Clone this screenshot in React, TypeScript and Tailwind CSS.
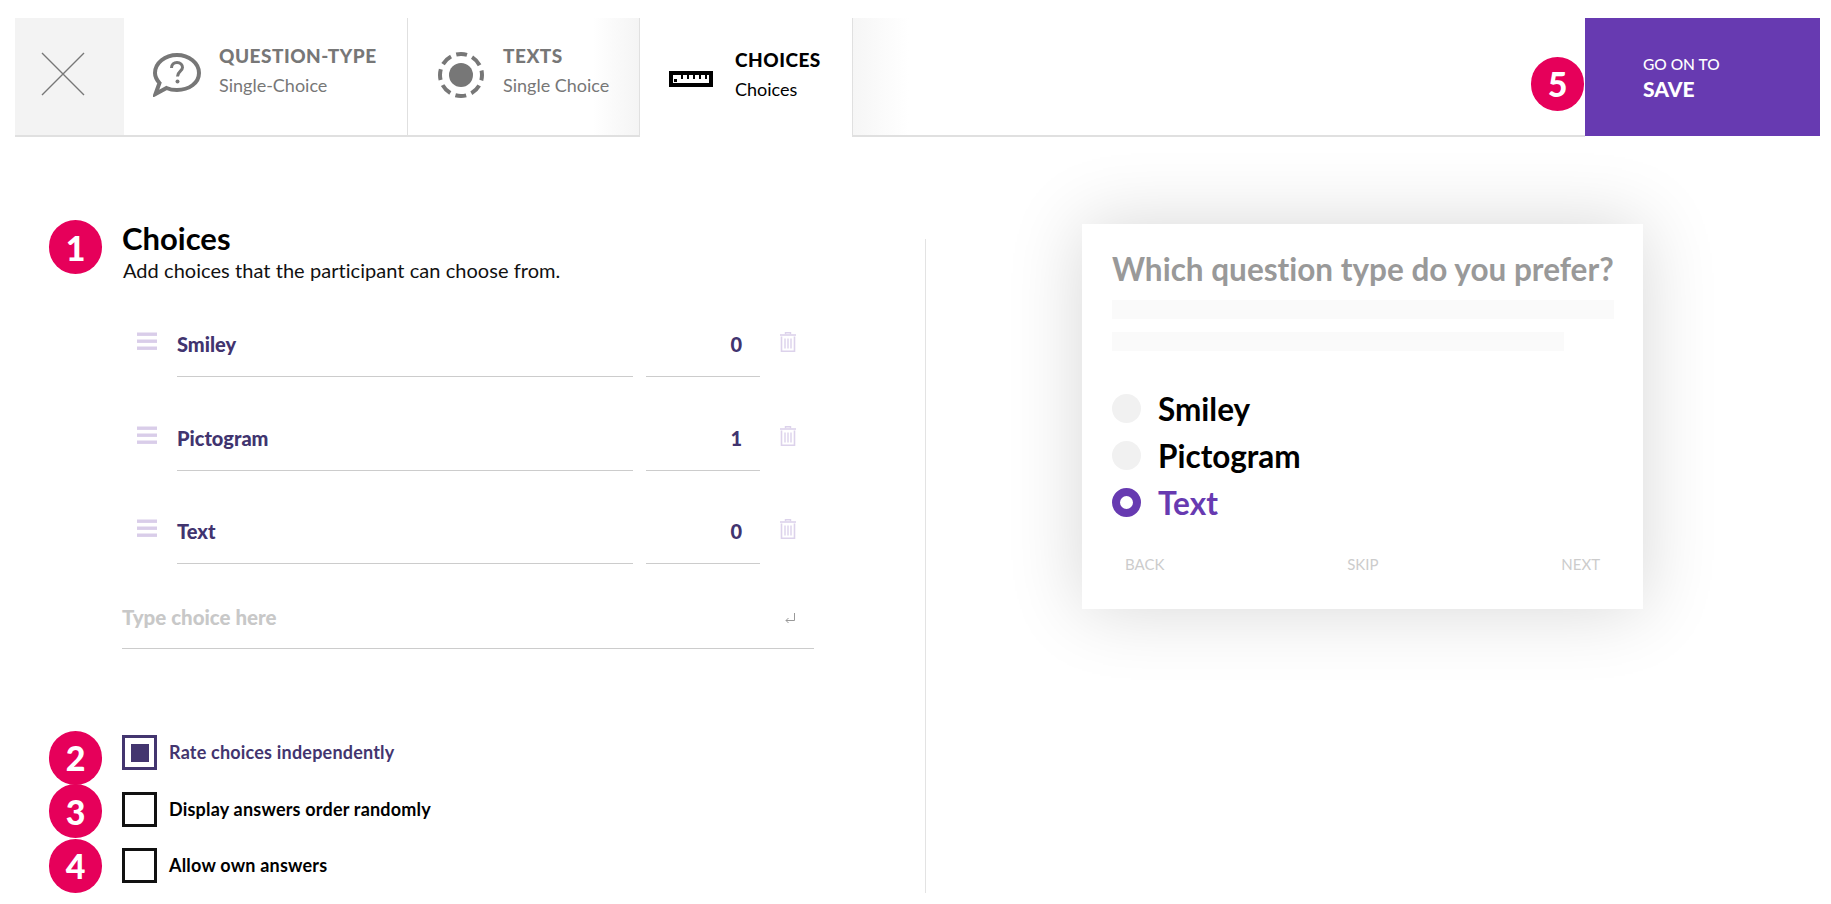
import React from "react";

const Badge = ({ n, className = "" }: { n: number; className?: string }) => (
  <div className={`w-[53px] h-[54px] rounded-full bg-[#e6005a] text-white flex items-center justify-center text-[34px] font-black shrink-0 ${className}`}>
    {n}
  </div>
);

const Bubble = () => (
  <svg width="48" height="44" viewBox="0 0 48 44" fill="none" stroke="#777" strokeWidth="4" className="shrink-0">
    <path d="M24 2C36 2 46 10 46 20C46 30 36 37 24 37C20 37 16.5 36.3 13.5 35L2.5 41L6.5 30C3.8 27 2 23.5 2 20C2 10 12 2 24 2Z" />
    <path d="M18.5 15C18.5 11.5 21 9.5 24 9.5C27.5 9.5 29.5 12 29.5 14.5C29.5 18 24.5 18.5 24.5 23.5" strokeWidth="3" />
    <circle cx="24.5" cy="28.5" r="2" fill="#777" stroke="none" />
  </svg>
);

const DashedRadio = () => (
  <svg width="46" height="46" viewBox="0 0 46 46" fill="none" className="shrink-0">
    <circle cx="23" cy="23" r="21" stroke="#777" strokeWidth="4" strokeDasharray="11 5.49" strokeDashoffset="5.5" />
    <circle cx="23" cy="23" r="12" fill="#777" />
  </svg>
);

const Ruler = () => (
  <svg width="44" height="17" viewBox="0 0 44 17" className="shrink-0">
    <rect x="2" y="2" width="40" height="12" fill="#fff" stroke="#000" strokeWidth="4" />
    <rect x="5" y="8" width="3" height="3" fill="#000" />
    {[12, 18, 24, 30, 36].map((x) => (
      <rect key={x} x={x} y="4" width="2" height="4" fill="#000" />
    ))}
  </svg>
);

const Burger = () => (
  <svg width="20" height="18" viewBox="0 0 20 18" fill="#d9cde9" className="shrink-0">
    <rect y="0.5" width="20" height="3.4" />
    <rect y="7.5" width="20" height="3.4" />
    <rect y="14.5" width="20" height="3.4" />
  </svg>
);

const Trash = () => (
  <svg width="16" height="20" viewBox="0 0 16 20" fill="none" stroke="#dcd2eb" className="shrink-0">
    <path d="M0 3h16" strokeWidth="1.6" />
    <path d="M5.5 2.2V.8h5v1.4" strokeWidth="1.4" />
    <path d="M1.5 4.5v14.7h13V4.5" strokeWidth="1.6" />
    <path d="M5 6.5v10M8 6.5v10M11 6.5v10" strokeWidth="1.4" />
  </svg>
);

const Tab = ({
  icon,
  title,
  sub,
  className,
  textClass,
  children,
}: {
  icon: React.ReactNode;
  title: string;
  sub: string;
  className: string;
  textClass: string;
  children?: React.ReactNode;
}) => (
  <div className={`relative flex ${className}`}>
    {children}
    {icon}
    <div className={`relative ${textClass}`}>
      <div className="text-[19px] leading-[24px] font-black tracking-[0.5px]">{title}</div>
      <div className="text-[18px] leading-[24px] mt-[5px] whitespace-nowrap">{sub}</div>
    </div>
  </div>
);

const Row = ({ name, value }: { name: string; value: number }) => (
  <div className="flex h-[93.5px] pl-[137px]">
    <div className="flex items-start gap-[20px] w-[626px] pt-[16px] shrink-0">
      <Burger />
      <div className="flex-1 flex gap-[13px] h-[44px]">
        <div className="w-[456px] h-[45px] border-b-[1.5px] border-[#cccccc] text-[20px] leading-[24px] font-black text-[#41346f]">
          {name}
        </div>
        <div className="w-[114px] h-[45px] border-b-[1.5px] border-[#cccccc] text-[20px] leading-[24px] font-black text-[#41346f] text-right pr-[18px]">
          {value}
        </div>
      </div>
      <Trash />
    </div>
  </div>
);

const Check = ({ n, label, on, badgeClass }: { n: number; label: string; on?: boolean; badgeClass: string }) => (
  <div className="flex items-center h-[56.6px] pl-[49px]">
    <Badge n={n} className={badgeClass} />
    <div
      className={`ml-[20px] w-[35px] h-[35px] border-[3px] flex items-center justify-center shrink-0 ${
        on ? "border-[#43356f]" : "border-[#111111]"
      }`}
    >
      {on && <div className="w-[18px] h-[18px] bg-[#43356f]" />}
    </div>
    <span className={`ml-[12px] text-[18px] tracking-[0.2px] font-bold ${on ? "text-[#43356f]" : "text-black"}`}>{label}</span>
  </div>
);

const Radio = ({ label, on }: { label: string; on?: boolean }) => (
  <div className="flex items-center h-[47px]">
    {on ? (
      <div className="w-[29px] h-[29px] rounded-full border-[8px] border-[#673ab1] bg-white shrink-0" />
    ) : (
      <div className="w-[29px] h-[29px] rounded-full bg-[#f1f1f1] shrink-0" />
    )}
    <span className={`ml-[17px] text-[31.5px] font-bold leading-[40px] ${on ? "text-[#673ab1]" : "text-black"}`}>{label}</span>
  </div>
);

export default function App() {
  return (
    <div className="w-full h-[904px] bg-white overflow-hidden pt-[18px] [font-variant-ligatures:none] font-['Lato','Noto_Sans',sans-serif]">
      <div className="flex h-[119px] ml-[15px] mr-[11px]">
        <div className="w-[109px] bg-[#f3f3f3] border-b-2 border-[#e0e0e0] flex items-center pl-[26px] pb-[5px] shrink-0">
          <svg width="44" height="44" viewBox="0 0 44 44" stroke="#777" strokeWidth="1.4" fill="none">
            <path d="M1 1l42 42M43 1L1 43" />
          </svg>
        </div>
        <Tab
          className="w-[284px] border-b-2 border-r border-[#e0e0e0] pl-[29px] pt-[35px] text-[#777] shrink-0"
          textClass="ml-[18px] -mt-[9px]"
          icon={<Bubble />}
          title="QUESTION-TYPE"
          sub="Single-Choice"
        />
        <Tab
          className="w-[232px] border-b-2 border-r border-[#e0e0e0] pl-[30px] pt-[34px] text-[#777] shrink-0"
          textClass="ml-[19px] -mt-[8px]"
          icon={<DashedRadio />}
          title="TEXTS"
          sub="Single Choice"
        >
          <div className="absolute right-0 top-0 bottom-0 w-[46px] bg-linear-to-l from-[#f4f4f4] to-transparent" />
        </Tab>
        <Tab
          className="w-[212px] pl-[29px] pt-[53px] text-black shrink-0"
          textClass="ml-[22px] -mt-[23px]"
          icon={<Ruler />}
          title="CHOICES"
          sub="Choices"
        />
        <div className="relative flex-1 border-b-2 border-l border-[#e0e0e0] flex items-center justify-end">
          <div className="absolute left-0 top-0 bottom-0 w-[56px] bg-linear-to-r from-[#f6f6f6] to-transparent" />
          <Badge n={5} className="relative mr-[1px] mt-[14px]" />
        </div>
        <div className="w-[235px] h-[118px] bg-[#673ab1] text-white pl-[58px] pt-[36px] shrink-0">
          <div className="text-[15.5px] leading-[20px] font-medium">GO ON TO</div>
          <div className="text-[21px] leading-[24px] font-black mt-[3px]">SAVE</div>
        </div>
      </div>

      <div className="flex">
        <div className="w-[925px] shrink-0 pt-[83px]">
          <div className="flex pl-[49px]">
            <Badge n={1} />
            <div className="ml-[21px]">
              <div className="text-[31px] leading-[36px] font-bold text-black -ml-[1px]">Choices</div>
              <div className="text-[20px] leading-[24px] text-[#111] mt-[2px] tracking-[0.05px]">Add choices that the participant can choose from.</div>
            </div>
          </div>
          <div className="mt-[34px]">
            <Row name="Smiley" value={0} />
            <Row name="Pictogram" value={1} />
            <Row name="Text" value={0} />
          </div>
          <div className="ml-[122px] w-[692px] h-[43px] mt-[9px] border-b-[1.5px] border-[#cccccc] flex items-start justify-between pr-[18px]">
            <span className="text-[20.5px] leading-[24px] font-black text-[#c8c8c8] -mt-[1px]">Type choice here</span>
            <svg width="12" height="12" viewBox="0 0 12 12" fill="none" stroke="#999" strokeWidth="1" className="mt-[6px]">
              <path d="M10.5 1v7.5H2M4.5 6L2 8.5 4.5 11" />
            </svg>
          </div>
          <div className="mt-[76px]">
            <Check n={2} label="Rate choices independently" on badgeClass="translate-y-[5px]" />
            <Check n={3} label="Display answers order randomly" badgeClass="translate-y-[2px]" />
            <Check n={4} label="Allow own answers" badgeClass="" />
          </div>
        </div>
        <div className="w-px h-[654px] mt-[102px] bg-[#e3e3e3] shrink-0" />
        <div className="ml-[156px] mt-[87px] w-[561px] h-[385px] bg-white shadow-[0_0_70px_rgba(0,0,0,0.16)] px-[30px] pt-[26px] shrink-0">
          <div className="text-[31.5px] leading-[38px] font-bold text-[#999999] whitespace-nowrap">Which question type do you prefer?</div>
          <div className="h-[19px] bg-[#fafafa] w-[502px] mt-[12px]" />
          <div className="h-[19px] bg-[#fafafa] w-[452px] mt-[13px]" />
          <div className="mt-[34px]">
            <Radio label="Smiley" />
            <Radio label="Pictogram" />
            <Radio label="Text" on />
          </div>
          <div className="flex justify-between px-[13px] mt-[28px] text-[15px] leading-[20px] text-[#cccccc]">
            <span>BACK</span>
            <span>SKIP</span>
            <span>NEXT</span>
          </div>
        </div>
      </div>
    </div>
  );
}
